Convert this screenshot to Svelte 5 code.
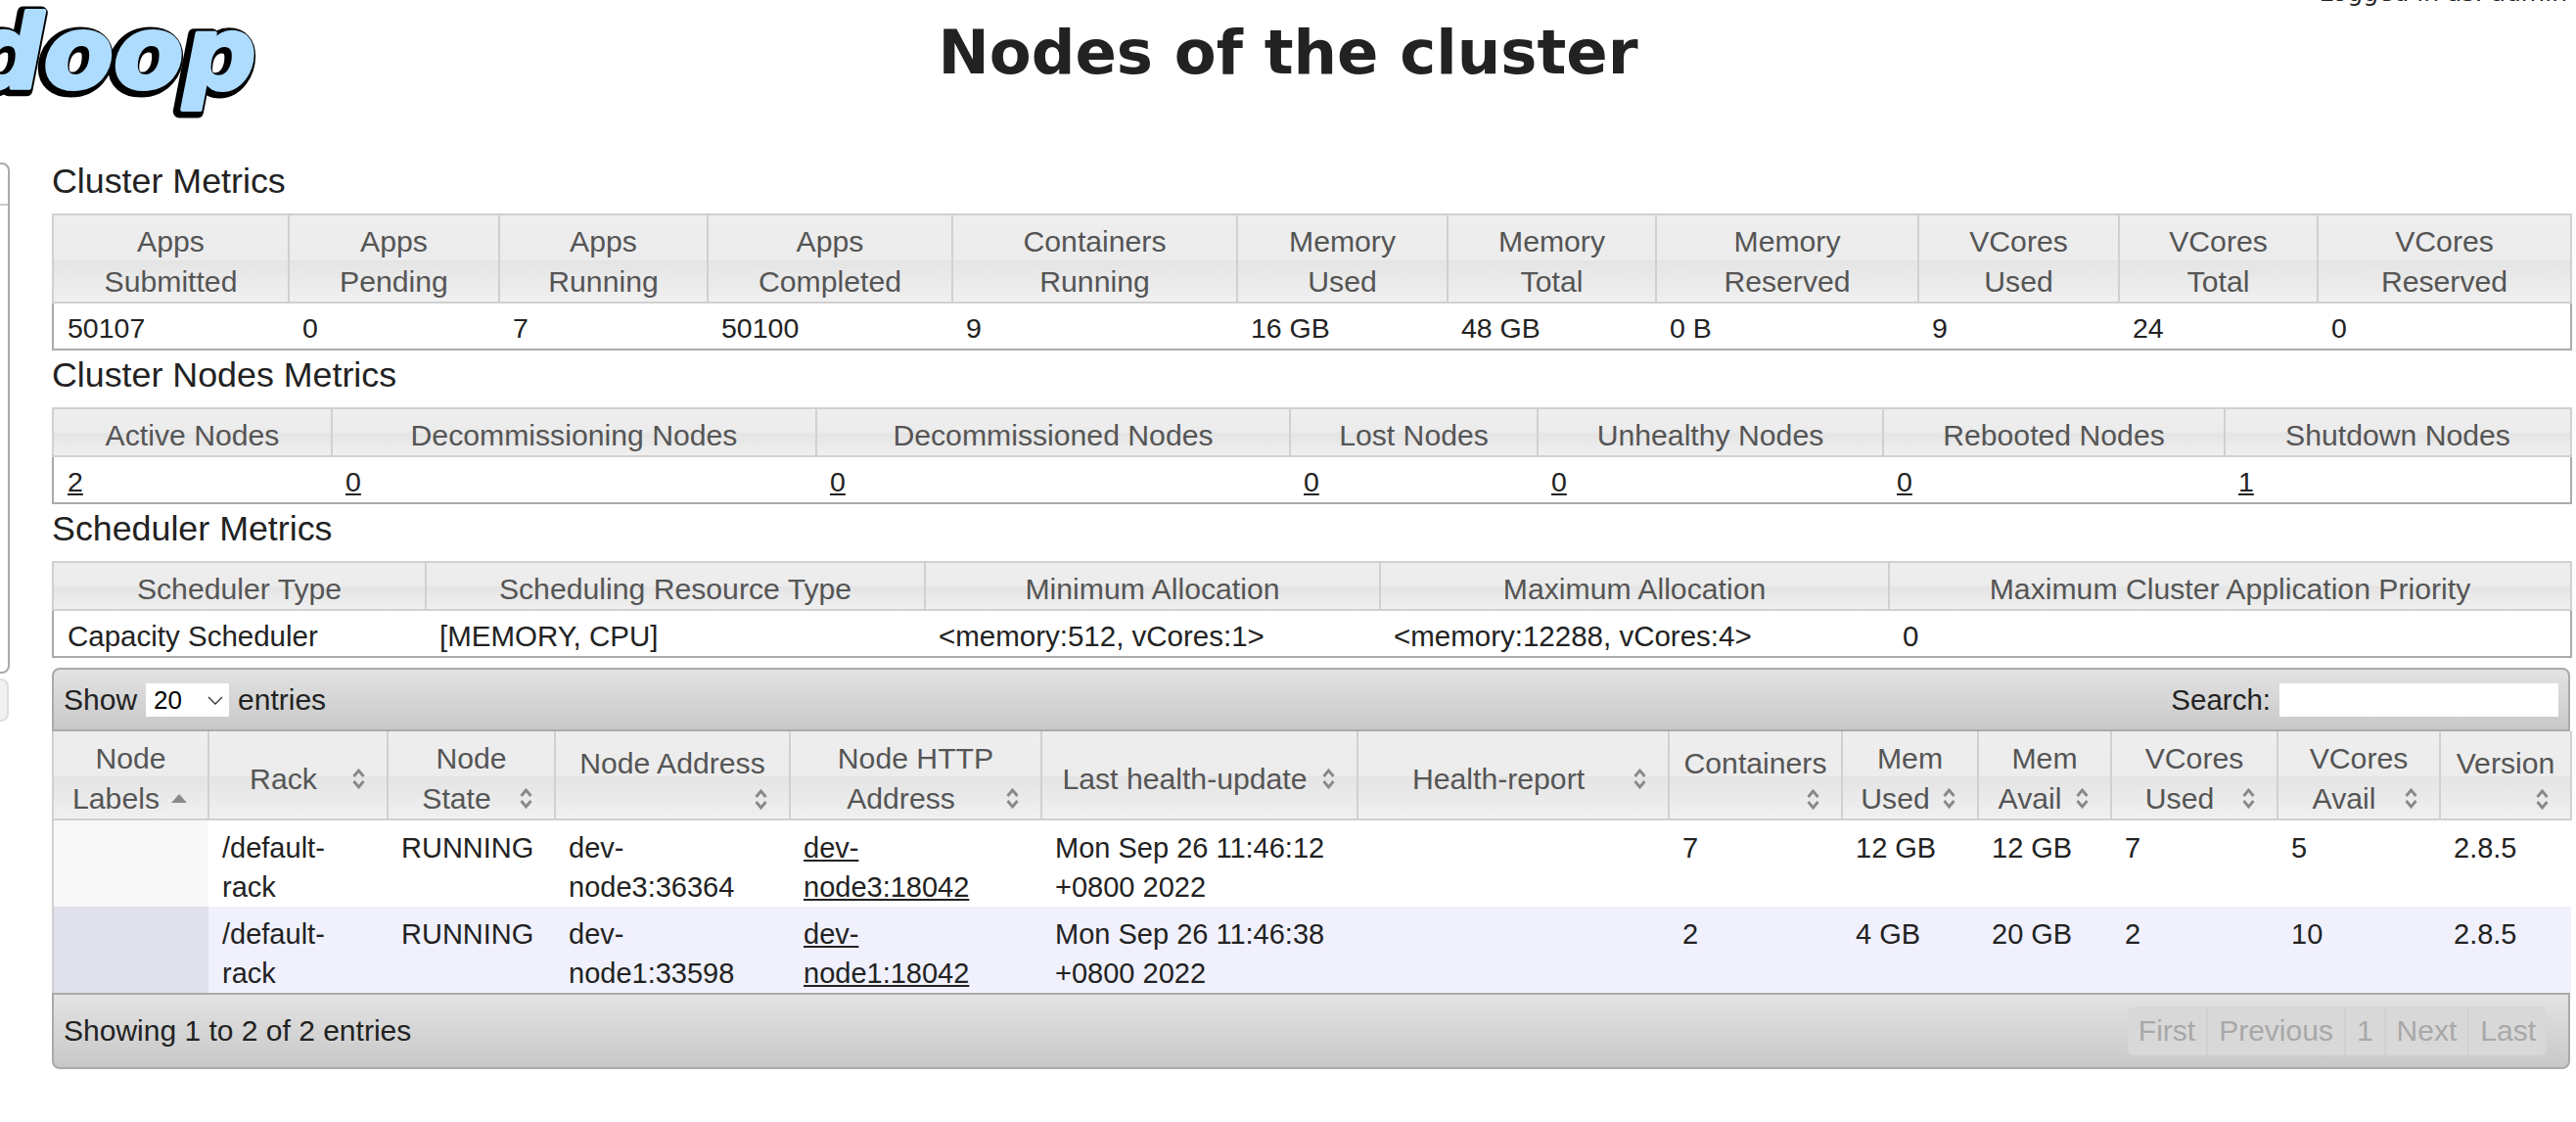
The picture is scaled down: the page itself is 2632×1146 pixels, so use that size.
<script>
  const clusterCols = [
    { title: ["Apps", "Submitted"], value: "50107", width: 241 },
    { title: ["Apps", "Pending"], value: "0", width: 215 },
    { title: ["Apps", "Running"], value: "7", width: 213 },
    { title: ["Apps", "Completed"], value: "50100", width: 250 },
    { title: ["Containers", "Running"], value: "9", width: 291 },
    { title: ["Memory", "Used"], value: "16 GB", width: 215 },
    { title: ["Memory", "Total"], value: "48 GB", width: 213 },
    { title: ["Memory", "Reserved"], value: "0 B", width: 268 },
    { title: ["VCores", "Used"], value: "9", width: 205 },
    { title: ["VCores", "Total"], value: "24", width: 203 },
    { title: ["VCores", "Reserved"], value: "0", width: 259 },
  ];

  const nodeMetricCols = [
    { title: ["Active Nodes"], value: "2", width: 285, link: true },
    { title: ["Decommissioning Nodes"], value: "0", width: 495, link: true },
    { title: ["Decommissioned Nodes"], value: "0", width: 484, link: true },
    { title: ["Lost Nodes"], value: "0", width: 253, link: true },
    { title: ["Unhealthy Nodes"], value: "0", width: 353, link: true },
    { title: ["Rebooted Nodes"], value: "0", width: 349, link: true },
    { title: ["Shutdown Nodes"], value: "1", width: 354, link: true },
  ];

  const schedulerCols = [
    { title: ["Scheduler Type"], value: "Capacity Scheduler", width: 381 },
    { title: ["Scheduling Resource Type"], value: "[MEMORY, CPU]", width: 510 },
    { title: ["Minimum Allocation"], value: "<memory:512, vCores:1>", width: 465 },
    { title: ["Maximum Allocation"], value: "<memory:12288, vCores:4>", width: 520 },
    { title: ["Maximum Cluster Application Priority"], value: "0", width: 697 },
  ];

  const sections = [
    { name: "Cluster Metrics", cols: clusterCols },
    { name: "Cluster Nodes Metrics", cols: nodeMetricCols },
    { name: "Scheduler Metrics", cols: schedulerCols, wide: true },
  ];

  const nodeCols = [
    { title: "Node Labels", width: 159, sorted: true },
    { title: "Rack", width: 183 },
    { title: "Node State", width: 171 },
    { title: "Node Address", width: 240, own: true },
    { title: "Node HTTP Address", width: 257 },
    { title: "Last health-update", width: 323 },
    { title: "Health-report", width: 318 },
    { title: "Containers", width: 177, own: true },
    { title: "Mem Used", width: 139 },
    { title: "Mem Avail", width: 136 },
    { title: "VCores Used", width: 170 },
    { title: "VCores Avail", width: 166 },
    { title: "Version", width: 134, own: true },
  ];

  const nodes = [
    {
      rack: "/default-rack",
      state: "RUNNING",
      addr: "dev-node3:36364",
      http: "dev-node3:18042",
      health: "Mon Sep 26 11:46:12 +0800 2022",
      containers: 7,
      memUsed: "12 GB",
      memAvail: "12 GB",
      coresUsed: 7,
      coresAvail: 5,
      version: "2.8.5",
    },
    {
      rack: "/default-rack",
      state: "RUNNING",
      addr: "dev-node1:33598",
      http: "dev-node1:18042",
      health: "Mon Sep 26 11:46:38 +0800 2022",
      containers: 2,
      memUsed: "4 GB",
      memAvail: "20 GB",
      coresUsed: 2,
      coresAvail: 10,
      version: "2.8.5",
    },
  ];

  const pager = ["First", "Previous", "1", "Next", "Last"];
</script>

<div class="page">
  <div class="logged-in">Logged in as: admin</div>

  <header class="header">
    <svg class="logo" viewBox="0 0 280 130" width="280" height="130">
      <text class="logo-shadow" x="-33" y="92">doop</text>
      <text class="logo-text" x="-30" y="90">doop</text>
    </svg>
    <h1>Nodes of the cluster</h1>
  </header>

  <div class="body">
    <nav class="nav">
      <div class="nav-box"><div class="nav-head"></div></div>
      <div class="nav-tab"></div>
    </nav>

    <main class="content">
      {#each sections as section}
        <h3>{section.name}</h3>
        <table class="metrics" class:wide={section.wide}>
          <colgroup>
            {#each section.cols as col}
              <col style:width="{col.width}px" />
            {/each}
          </colgroup>
          <thead>
            <tr>
              {#each section.cols as col}
                <th>
                  {#each col.title as line}
                    <div>{line}</div>
                  {/each}
                </th>
              {/each}
            </tr>
          </thead>
          <tbody>
            <tr>
              {#each section.cols as col}
                <td>
                  {#if col.link}
                    <a href="#nodes">{col.value}</a>
                  {:else}
                    {col.value}
                  {/if}
                </td>
              {/each}
            </tr>
          </tbody>
        </table>
      {/each}

      <div class="toolbar top">
        <label class="length">
          Show
          <span class="select-wrap">
            <select>
              <option>20</option>
              <option>40</option>
            </select>
            <svg class="select-arrow" viewBox="0 0 16 9" width="16" height="9">
              <path d="M1 1l7 7 7-7" fill="none" stroke="#333" stroke-width="1.3" />
            </svg>
          </span>
          entries
        </label>
        <label class="search">
          Search:
          <input type="text" />
        </label>
      </div>

      <table class="nodes" id="nodes">
        <colgroup>
          {#each nodeCols as col}
            <col style:width="{col.width}px" />
          {/each}
        </colgroup>
        <thead>
          <tr>
            {#each nodeCols as col}
              <th>
                <div class="sort-wrap" class:own={col.own}>
                  <span class="sort-label">{col.title}</span>
                  <span class="sort-icon">
                    {#if col.sorted}
                      <svg viewBox="0 0 16 9" width="16" height="9">
                        <path d="M8 0l8 9H0z" fill="#8a8a8a" />
                      </svg>
                    {:else}
                      <svg viewBox="0 0 15 21" width="15" height="21">
                        <path d="M2.5 8L7.5 2l5 6M2.5 13l5 6 5-6" fill="none" stroke="#888" stroke-width="2.8" />
                      </svg>
                    {/if}
                  </span>
                </div>
              </th>
            {/each}
          </tr>
        </thead>
        <tbody>
          {#each nodes as node, i}
            <tr class:even={i % 2 === 1}>
              <td class="labels"></td>
              <td>{node.rack}</td>
              <td>{node.state}</td>
              <td>{node.addr}</td>
              <td class="http"><a href="#nodes">{node.http}</a></td>
              <td>{node.health}</td>
              <td></td>
              <td>{node.containers}</td>
              <td>{node.memUsed}</td>
              <td>{node.memAvail}</td>
              <td>{node.coresUsed}</td>
              <td>{node.coresAvail}</td>
              <td>{node.version}</td>
            </tr>
          {/each}
        </tbody>
      </table>

      <div class="toolbar bottom">
        <div>Showing 1 to 2 of 2 entries</div>
        <div class="pager">
          {#each pager as item}
            <span class="page-btn">{item}</span>
          {/each}
        </div>
      </div>
    </main>
  </div>
</div>

<style>
  :global(body) {
    margin: 0;
    background: #fff;
  }

  .page {
    position: relative;
    width: 2632px;
    height: 1146px;
    overflow: hidden;
    font-family: "Liberation Sans", Arial, sans-serif;
    color: #222;
  }

  .logged-in {
    position: absolute;
    top: -24px;
    right: 9px;
    font-family: "DejaVu Sans", sans-serif;
    font-size: 25px;
    line-height: 34px;
  }

  .header {
    display: grid;
    grid-template-columns: 280px 1fr 280px;
    height: 160px;
  }

  .logo {
    display: block;
  }

  .logo-text,
  .logo-shadow {
    font-family: "DejaVu Sans", sans-serif;
    font-size: 104px;
    font-weight: 700;
    font-style: italic;
    stroke-linejoin: round;
  }

  .logo-shadow {
    fill: #000;
    stroke: #000;
    stroke-width: 13px;
  }

  .logo-text {
    fill: #aedcff;
    stroke: #aedcff;
    stroke-width: 4px;
  }

  h1 {
    margin: 0;
    padding-top: 14px;
    text-align: center;
    font-family: "DejaVu Sans", sans-serif;
    font-size: 62.5px;
    line-height: 80px;
    font-weight: 700;
  }

  .body {
    display: grid;
    grid-template-columns: 10px 1fr;
    column-gap: 43px;
    padding-right: 6px;
  }

  .nav {
    display: flex;
    flex-direction: column;
    gap: 5px;
    padding-top: 6px;
  }

  .nav-box {
    width: 30px;
    height: 522px;
    margin-left: -20px;
    box-sizing: border-box;
    border: 2px solid #aaa;
    border-radius: 8px;
  }

  .nav-head {
    height: 40px;
    border-bottom: 2px solid #ccc;
  }

  .nav-tab {
    width: 29px;
    height: 44px;
    margin-left: -20px;
    box-sizing: border-box;
    background: #f2f2f2;
    border: 2px solid #ddd;
    border-radius: 8px;
  }

  .content {
    min-width: 0;
  }

  h3 {
    margin: 0 0 8px;
    font-size: 35.8px;
    line-height: 50px;
    font-weight: 400;
  }

  table {
    width: 2573px;
    table-layout: fixed;
    border-collapse: collapse;
  }

  .metrics {
    border: 2px solid #aaa;
  }

  th {
    padding: 6px 14px 0;
    font-size: 30.2px;
    line-height: 41px;
    font-weight: 400;
    color: #555;
    text-align: center;
    border: 2px solid #d0d0d0;
    background: linear-gradient(#eee 0, #ececec 52%, #e4e4e4 52%, #f0f0f0 100%);
  }

  td {
    padding: 5px 14px 0;
    font-size: 28.5px;
    line-height: 41px;
    vertical-align: top;
  }

  .wide td {
    font-size: 29.5px;
  }

  a {
    color: #222;
  }

  .toolbar {
    display: flex;
    align-items: center;
    justify-content: space-between;
    box-sizing: border-box;
    width: 2573px;
    padding: 0 10px;
    font-size: 30px;
    border: 2px solid #aaa;
    background: linear-gradient(#e3e3e3, #c8c8c8);
  }

  .toolbar.top {
    height: 65px;
    margin-top: 10px;
    border-radius: 8px 8px 0 0;
  }

  .toolbar.bottom {
    height: 78px;
    border-radius: 0 0 8px 8px;
    padding-right: 22px;
  }

  .length {
    display: flex;
    align-items: center;
    gap: 9px;
  }

  .select-wrap {
    position: relative;
    display: block;
    width: 85px;
    height: 34px;
  }

  select {
    appearance: none;
    display: block;
    width: 100%;
    height: 100%;
    padding: 0 0 0 8px;
    border: 0;
    border-radius: 0;
    background: #fff;
    font-family: inherit;
    font-size: 26px;
    color: #000;
  }

  .select-arrow {
    position: absolute;
    right: 6px;
    top: 13px;
  }

  .search {
    display: flex;
    align-items: center;
    gap: 9px;
    font-size: 29.5px;
  }

  input {
    display: block;
    box-sizing: border-box;
    width: 285px;
    height: 34px;
    padding: 0 6px;
    border: 0;
    background: #fff;
  }

  .nodes {
    border-left: 2px solid #d0d0d0;
  }

  .nodes th {
    padding: 7px 14px 0;
    border-top: 0;
    border-left: 0;
  }

  .sort-wrap::after {
    content: "";
    display: block;
    clear: both;
  }

  .sort-icon {
    float: right;
    display: flex;
    align-items: center;
    justify-content: center;
    width: 30px;
    height: 41px;
  }

  /* headers that fill their line: the icon drops below and the label sits a bit lower */
  .own .sort-label {
    display: block;
    line-height: 51px;
  }

  .own .sort-icon {
    box-sizing: border-box;
    height: 31px;
    padding-bottom: 8px;
  }

  .nodes td {
    padding: 8px 14px 0;
    font-size: 29px;
    line-height: 40px;
    overflow-wrap: break-word;
  }

  .nodes td.http {
    padding-right: 40px;
  }

  .labels {
    background: #f8f8f8;
  }

  .even {
    background: #f0f1fd;
  }

  .even .labels {
    background: #dfe0ea;
  }

  .pager {
    display: flex;
    height: 50px;
    background: #d8d8d8;
    border-radius: 6px;
  }

  .page-btn {
    display: flex;
    align-items: center;
    padding: 0 11px;
    color: #a8a8a8;
    border-right: 2px solid #d0d0d0;
  }

  .page-btn:last-child {
    border-right: 0;
  }
</style>
